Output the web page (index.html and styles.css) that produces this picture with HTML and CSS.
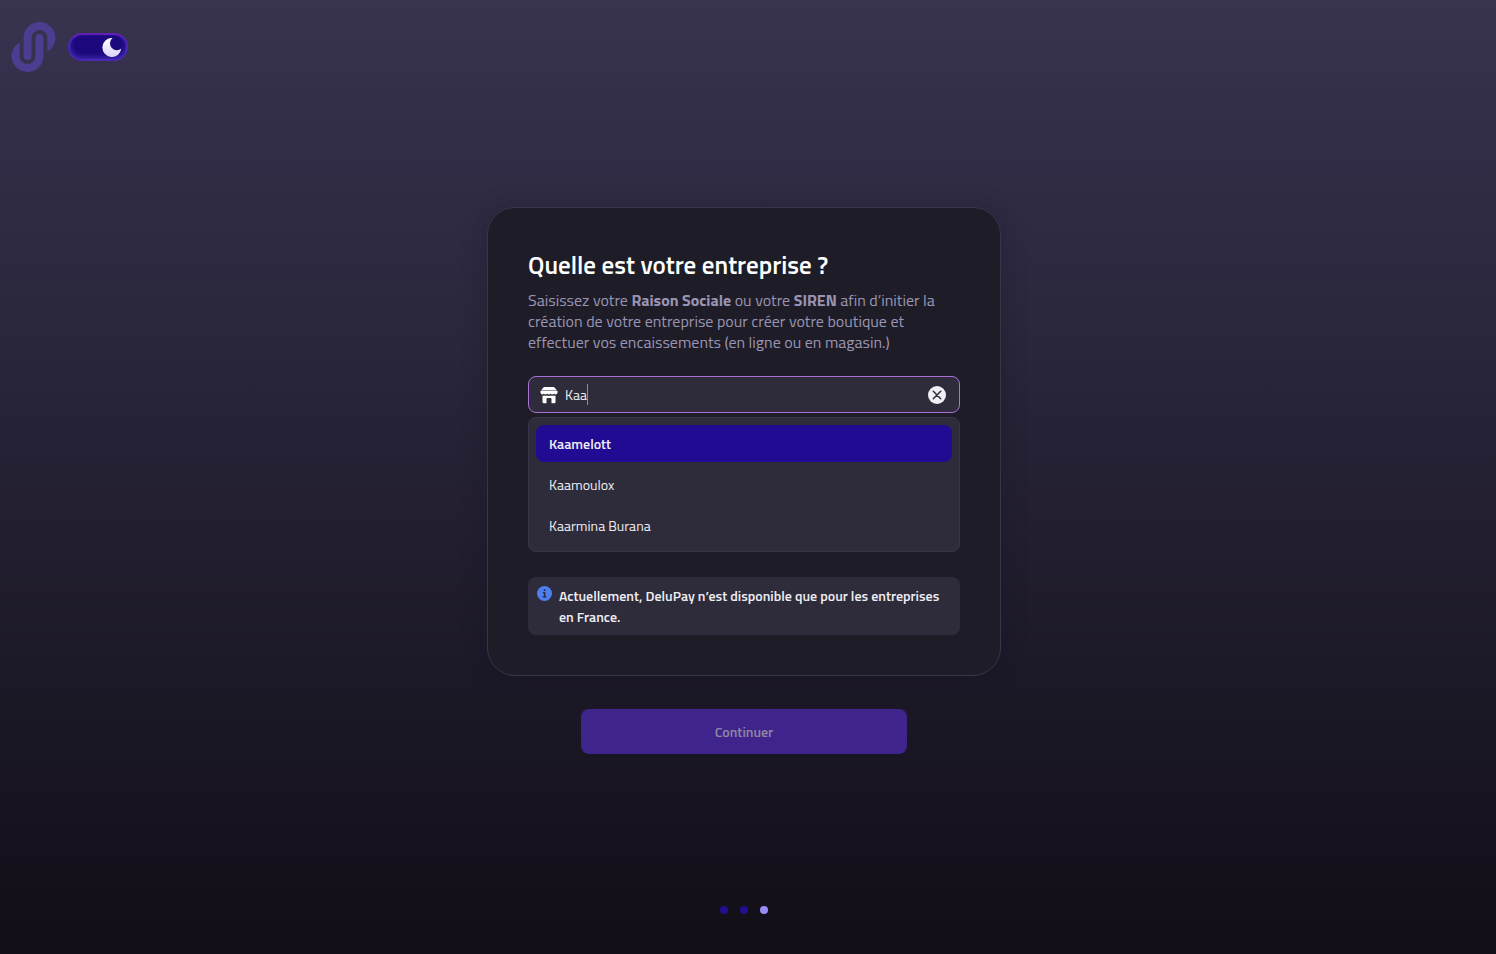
FILE: index.html
```html
<!DOCTYPE html>
<html lang="fr">
<head>
<meta charset="utf-8">
<meta name="viewport" content="width=device-width, initial-scale=1">
<title>DeluPay</title>
<link rel="stylesheet" href="styles.css">
</head>
<body>
<header class="topbar">
  <svg class="logo" viewBox="35 35 132 151" role="img" aria-label="DeluPay">
    <g fill="none" stroke="#4d3d90" stroke-width="24">
      <path d="M47 130V138A36 36 0 0 0 119 138V83"/>
      <path d="M155 91V83A36 36 0 0 0 83 83V138"/>
    </g>
    <g fill="#4d3d90">
      <circle cx="119" cy="83" r="12"/><circle cx="83" cy="138" r="12"/>
      <path d="M35 134Q37 110 59 97V134H35zM167 87Q165 111 143 124V87H167z"/>
    </g>
  </svg>
  <button class="theme" type="button" role="switch" aria-checked="true" aria-label="Mode sombre">
    <svg class="moon" viewBox="0 0 20 20" aria-hidden="true">
      <defs><linearGradient id="m" x2="0" y2="1"><stop offset="0" stop-color="#fff"/><stop offset="1" stop-color="#dcd3fa"/></linearGradient></defs>
      <path fill="url(#m)" d="M10.500 1A6.400 6.400 0 0 0 19.300 11.600A9.500 9.500 0 1 1 10.500 1z"/>
    </svg>
  </button>
</header>
<main class="content">
  <section class="card">
    <h1 class="title">Quelle est votre entreprise ?</h1>
    <p class="intro">Saisissez votre <strong>Raison Sociale</strong> ou votre <strong>SIREN</strong> afin d’initier la<br>création de votre entreprise pour créer votre boutique et<br>effectuer vos encaissements (en ligne ou en magasin.)</p>
    <div class="field">
      <label class="field-label" for="company" aria-label="Entreprise">
        <svg class="shop" viewBox="0 0 18 18" fill="#fff" aria-hidden="true">
          <path d="M4.500 1h9a1.500 1.500 0 0 1 1.100.500L16.500 4h-15l1.900-2.500A1.500 1.500 0 0 1 4.500 1z"/>
          <path d="M1 4.600h16a1 1 0 0 1 .5 1v1.200a1.800 1.800 0 0 1-3.400.6 1.900 1.900 0 0 1-3.400 0 1.900 1.900 0 0 1-3.400 0 1.900 1.900 0 0 1-3.400 0A1.800 1.800 0 0 1 .5 6.800V5.600A1 1 0 0 1 1 4.600z"/>
          <path d="M2.500 9.800q1 .2 1.800-.3 1.300.8 2.700 0 2 .9 4 0 1.400.8 2.700 0 .8.500 1.800.3V16a1.200 1.200 0 0 1-1.200 1.200H11.500V13a1 1 0 0 0-1-1h-3a1 1 0 0 0-1 1v4.200H3.700A1.200 1.200 0 0 1 2.500 16z"/>
        </svg>
      </label>
      <input class="input" id="company" type="text" value="Kaa" autocomplete="off">
      <span class="caret" aria-hidden="true"></span>
      <button class="clear" type="button" aria-label="Effacer">
        <svg viewBox="0 0 18 18" aria-hidden="true"><circle cx="9" cy="9" r="9" fill="#f0eff5"/><path d="M5.300 5.300l7.400 7.400M12.700 5.300l-7.400 7.400" stroke="#2e2c3a" stroke-width="1.500" stroke-linecap="round"/></svg>
      </button>
    </div>
    <div class="options" role="listbox" aria-label="Entreprises">
      <button class="option selected" type="button" role="option" aria-selected="true">Kaamelott</button>
      <button class="option" type="button" role="option" aria-selected="false">Kaamoulox</button>
      <button class="option" type="button" role="option" aria-selected="false">Kaarmina Burana</button>
    </div>
    <div class="notice">
      <svg class="info" viewBox="0 0 15 15" aria-hidden="true"><circle cx="7.500" cy="7.500" r="7.500" fill="#4d7ff0"/><path fill="#2b2a42" d="M6.700 3.300h1.700v1.600H6.700zM5.800 6h2.500v4.300h1.100v1.200H5.700v-1.200h1.100V7.200h-1z"/></svg>
      <p class="notice-text">Actuellement, DeluPay n’est disponible que pour les entreprises<br>en France.</p>
    </div>
  </section>
  <button class="continue" type="button" disabled>Continuer</button>
</main>
<footer class="steps" aria-label="Étape 3 sur 3">
  <span class="dot"></span><span class="dot"></span><span class="dot current"></span>
</footer>
</body>
</html>
```
FILE: styles.css
```css
* { box-sizing: border-box; }

body {
  margin: 0;
  min-height: 100vh;
  display: flex;
  flex-direction: column;
  background: linear-gradient(#38334f, #110e17);
  color: #eeedf4;
  font-family: "Titillium Web", "Noto Sans", sans-serif;
  font-size: 14px;
  line-height: 21px;
}

button, input { font: inherit; color: inherit; }
svg { display: block; }

.topbar {
  display: flex;
  align-items: center;
  gap: 12px;
  height: 94px;
  padding: 0 11px;
}

.logo { width: 45px; height: 50px; }

.theme {
  display: flex;
  align-items: center;
  justify-content: flex-end;
  width: 60px;
  height: 28px;
  padding: 0 4px;
  border: 2px solid #4c27b5;
  border-top-color: #6320b4;
  border-radius: 14px;
  background: #1c087c;
  box-shadow: inset 0 -2px 5px #3d2bb0;
}

.moon { width: 20px; height: 20px; }

.content {
  flex: 1;
  display: flex;
  flex-direction: column;
  align-items: center;
  justify-content: center;
  gap: 33px;
  padding-right: 8px;
}

.card {
  width: 100%;
  max-width: 514px;
  padding: 40px;
  border: 1px solid #38354a;
  border-radius: 28px;
  background: #1e1d27;
  box-shadow: 0 0 24px rgba(20, 16, 34, 0.3);
}

.title {
  margin: 0 0 8px;
  color: #fff;
  font-size: 25px;
  font-weight: 600;
  line-height: 34px;
}

.intro {
  margin: 0 0 23px;
  color: #9a94b4;
  font-size: 16px;
  line-height: 21px;
}

.intro strong { font-weight: 700; }

.field {
  display: flex;
  align-items: center;
  height: 37px;
  padding: 0 13px 0 11px;
  border: 1px solid #a871d8;
  border-radius: 8px;
  background: #2e2c3a;
}

.field-label { margin-right: 7px; }
.shop { width: 18px; height: 18px; }

.input {
  field-sizing: content;
  min-width: 0;
  padding: 0;
  border: 0;
  outline: 0;
  background: none;
}

.caret { width: 1px; height: 21px; background: #a871d8; }

.clear {
  width: 18px;
  margin-left: auto;
  padding: 0;
  border: 0;
  background: none;
}

.options {
  display: flex;
  flex-direction: column;
  gap: 4px;
  margin: 4px 0 25px;
  padding: 7px;
  border: 1px solid #38354a;
  border-radius: 8px;
  background: #2e2c3a;
}

.option {
  height: 37px;
  padding: 0 13px;
  border: 0;
  border-radius: 8px;
  background: none;
  text-align: left;
}

.option.selected { background: #210b92; font-weight: 600; }

.notice {
  display: flex;
  gap: 7px;
  padding: 8px 9px;
  border-radius: 8px;
  background: #2e2c3a;
}

.info { flex: none; width: 15px; height: 15px; margin-top: 1px; }
.notice-text { margin: 0; font-weight: 600; white-space: nowrap; }

.continue {
  width: 326px;
  height: 45px;
  border: 0;
  border-radius: 8px;
  background: #3f248b;
  color: #8d87a4;
  font-weight: 600;
}

.steps {
  display: flex;
  justify-content: center;
  align-items: center;
  gap: 12px;
  height: 87px;
  padding: 0 8px 2px 0;
}

.dot { width: 8px; height: 8px; border-radius: 50%; background: #220d92; }
.dot.current { background: #958df5; }
```
